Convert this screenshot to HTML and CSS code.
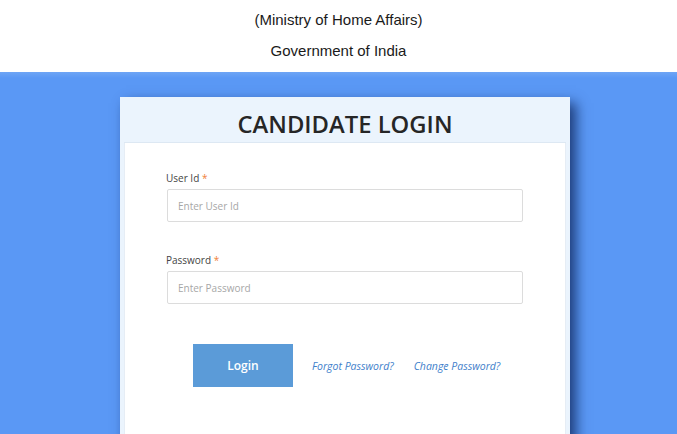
FILE: index.html
```html
<!DOCTYPE html>
<html>
<head>
<meta charset="utf-8">
<link rel="stylesheet" href="styles.css">
</head>
<body>
<header class="top">
  <p class="line">(Ministry of Home Affairs)</p>
  <p class="line">Government of India</p>
</header>
<main class="stage">
  <section class="card">
    <h1 class="card-title">CANDIDATE LOGIN</h1>
    <div class="card-body">
      <div class="field">
        <label class="label">User Id <span class="req">*</span></label>
        <input class="input" type="text" placeholder="Enter User Id">
      </div>
      <div class="field">
        <label class="label">Password <span class="req">*</span></label>
        <input class="input" type="password" placeholder="Enter Password">
      </div>
      <div class="actions">
        <button class="btn">Login</button>
        <a class="link" href="#">Forgot Password?</a>
        <a class="link" href="#">Change Password?</a>
      </div>
    </div>
  </section>
</main>
</body>
</html>
```
FILE: styles.css
```css
html, body {
  margin: 0;
  padding: 0;
  height: 100%;
  overflow: hidden;
}
body {
  font-family: "Open Sans", "Liberation Sans", sans-serif;
  background: #5a98f5;
}
.top {
  background: #fff;
  height: 72px;
  text-align: center;
  font-family: "Liberation Sans", Arial, sans-serif;
  font-size: 15px;
  color: #1a1a1a;
  padding-top: 11px;
  box-sizing: border-box;
}
.line {
  margin: 0 0 13px 0;
  line-height: 18px;
}
.stage {
  display: flex;
  justify-content: center;
  padding: 25px 0 0 0;
  background: linear-gradient(#6ea5f5 0, #5a98f5 6px);
  height: 400px;
}
.card {
  width: 450px;
  margin-left: 13px;
  background: #ebf4fd;
  padding: 0 4px;
  box-sizing: border-box;
  box-shadow: 6px 6px 12px rgba(10, 30, 80, 0.75);
  align-self: flex-start;
  height: 400px;
}
.card-title {
  margin: 0;
  height: 46px;
  line-height: 55px;
  text-align: center;
  font-size: 23.8px;
  font-weight: 600;
  color: #262626;
  border-bottom: 1px solid #dde8f3;
  box-sizing: border-box;
}
.card-body {
  background: #fff;
  height: 360px;
  padding: 29px 42px 0 42px;
  border-left: 1px solid #e6edf5;
  border-right: 1px solid #e6edf5;
}
.field {
  margin-bottom: 32px;
}
.label {
  display: block;
  font-size: 10px;
  color: #444;
  line-height: 12px;
  margin-bottom: 5px;
  margin-left: -1px;
}
.req {
  color: #f0813a;
}
.input {
  display: block;
  width: 356px;
  height: 33px;
  box-sizing: border-box;
  border: 1px solid #dcdcdc;
  border-radius: 2px;
  padding: 0 10px;
  font-family: "Open Sans", "Liberation Sans", sans-serif;
  font-size: 10px;
  color: #333;
  outline: none;
}
.input::placeholder {
  color: #a7a7a7;
}
.actions {
  display: flex;
  align-items: center;
  padding: 8px 0 0 26px;
}
.btn {
  width: 100px;
  height: 43px;
  border: none;
  background: #5b9bd8;
  color: #fff;
  font-family: "Open Sans", "Liberation Sans", sans-serif;
  font-size: 12px;
  font-weight: 600;
  margin-right: 19px;
}
.link {
  font-size: 10.5px;
  font-style: italic;
  color: #3f7fcb;
  text-decoration: none;
  margin-right: 20px;
}
```
